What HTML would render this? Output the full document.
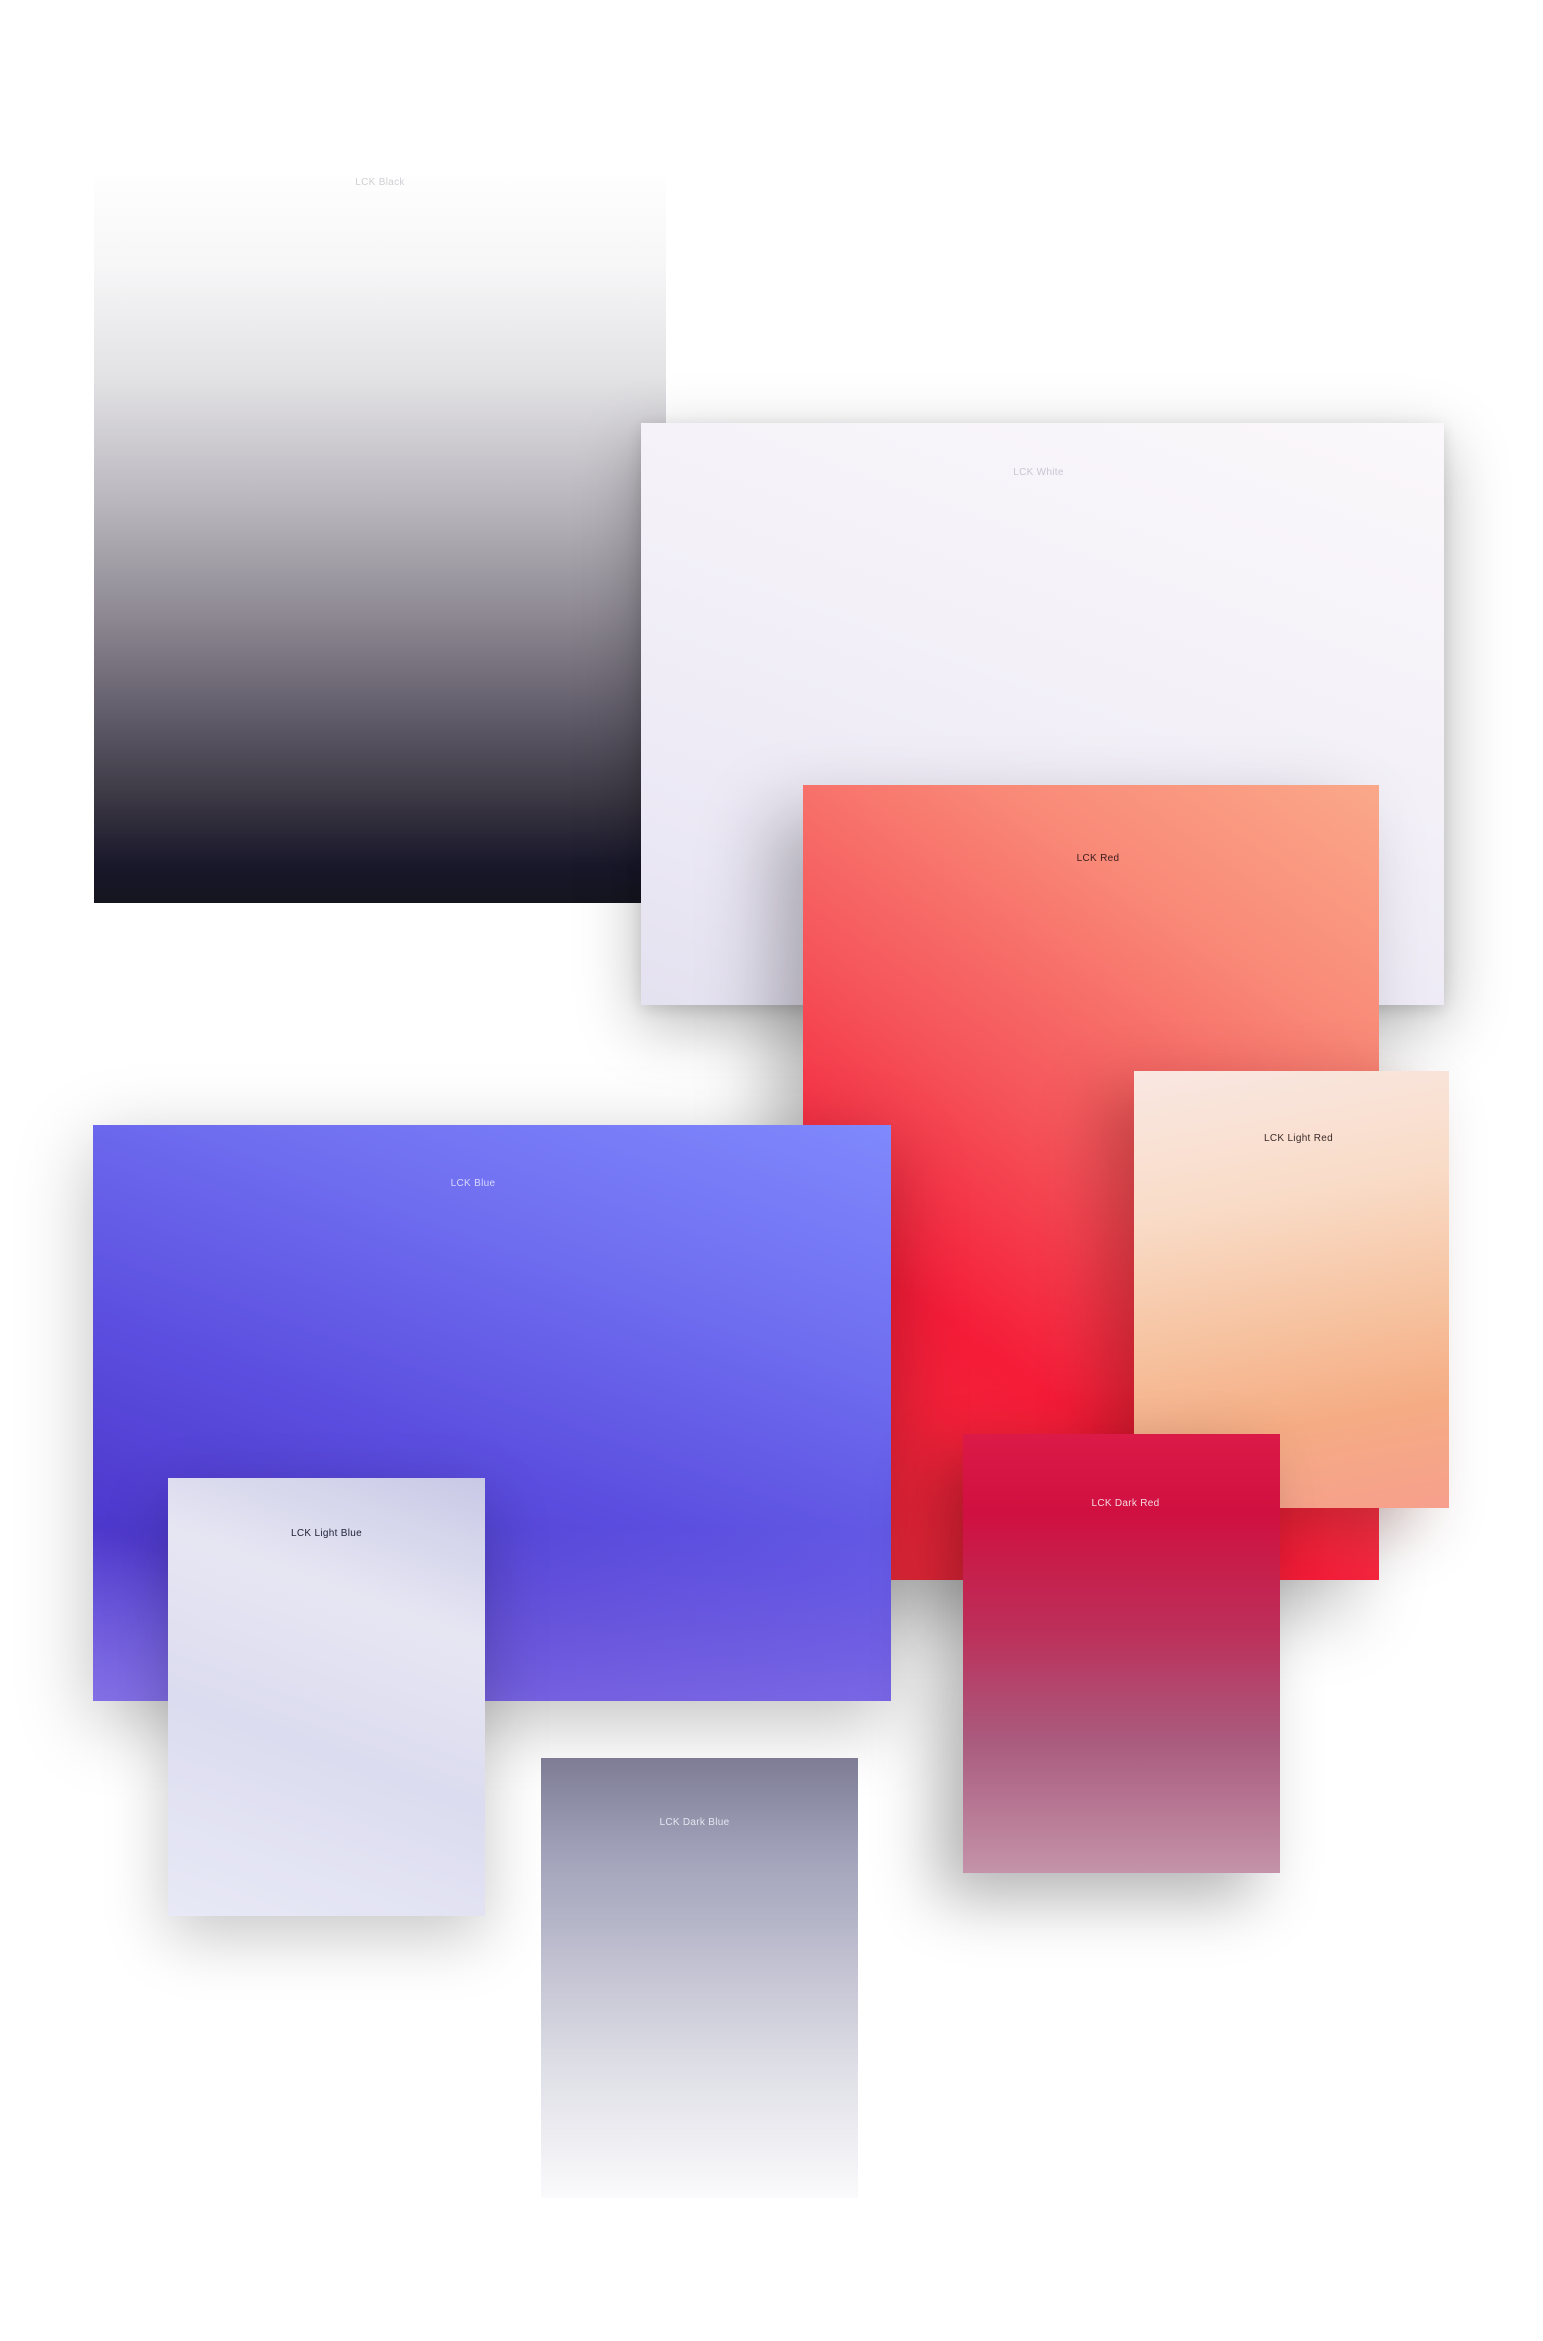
<!DOCTYPE html>
<html><head><meta charset="utf-8">
<style>
html,body{margin:0;padding:0;background:#fff;}
body{width:1543px;height:2341px;position:relative;overflow:hidden;font-family:"Liberation Sans",sans-serif;}
.c{position:absolute;}
.l{position:absolute;left:0;right:0;text-align:center;font-size:10px;letter-spacing:0.3px;}
</style></head><body>

<div class="c" style="left:94px;top:175px;width:572px;height:728px;background:linear-gradient(180deg,#fefefe 0%,#f7f7f8 12%,#e2e1e4 28%,#b9b7bd 45%,#8f8a94 60%,#625d6a 74%,#3a3642 86%,#18172a 95%,#15151f 100%);">
  <div class="l" style="top:2px;color:#d0d0d4;">LCK Black</div>
</div>

<div class="c" style="left:641px;top:423px;width:803px;height:582px;background:linear-gradient(200deg,#fbf8fb 0%,#f3f0f8 45%,#ebe8f5 80%,#e4e1f0 100%);box-shadow:0 20px 60px rgba(0,0,0,0.28),0 4px 14px rgba(0,0,0,0.12);">
  <div class="l" style="top:44px;left:-8px;color:#c8c6d2;">LCK White</div>
</div>

<div class="c" style="left:803px;top:785px;width:576px;height:795px;background:linear-gradient(215deg,#faa88a 0%,#f98a78 22%,#f5535a 48%,#f51c38 70%,#ee2c3c 100%);box-shadow:-30px 30px 70px rgba(0,0,0,0.28);">
  <div class="l" style="top:68px;left:14px;color:#3a1a1e;">LCK Red</div>
</div>

<div class="c" style="left:1134px;top:1071px;width:315px;height:437px;background:linear-gradient(170deg,#f9e7e2 0%,#f9dcc8 30%,#f6c09c 60%,#f5ac84 78%,#f79f8c 100%);box-shadow:-30px 20px 60px rgba(80,0,0,0.3);">
  <div class="l" style="top:62px;left:14px;color:#3a2a2a;">LCK Light Red</div>
</div>

<div class="c" style="left:93px;top:1125px;width:798px;height:576px;background:linear-gradient(200deg,#8089fd 0%,#6f6ef0 28%,#5c4fe0 55%,#4d38cc 80%,#6b58d8 100%);box-shadow:0 20px 70px rgba(0,0,0,0.25);">
  <div style="position:absolute;inset:0;background:linear-gradient(180deg,rgba(0,0,0,0) 70%,rgba(150,130,240,0.55) 100%);"></div>
  <div class="l" style="top:53px;left:-38px;color:#d8d8ff;">LCK Blue</div>
</div>

<div class="c" style="left:963px;top:1434px;width:317px;height:439px;background:linear-gradient(180deg,#dc1a48 0%,#d01040 18%,#bc2f5a 45%,#aa5b7e 70%,#c493a9 100%);box-shadow:-25px 25px 60px rgba(0,0,0,0.3);">
  <div class="l" style="top:64px;left:8px;color:#f5d8de;">LCK Dark Red</div>
</div>

<div class="c" style="left:168px;top:1478px;width:317px;height:438px;background:linear-gradient(200deg,#c8c8e6 0%,#e6e6f3 30%,#dcdcf0 60%,#e8e9f6 100%);box-shadow:0 20px 60px rgba(0,0,0,0.22);">
  <div class="l" style="top:50px;color:#22223a;">LCK Light Blue</div>
</div>

<div class="c" style="left:541px;top:1758px;width:317px;height:440px;background:linear-gradient(180deg,#7d7c94 0%,#9f9fb8 20%,#bfbfd0 45%,#dedee6 70%,#fafafc 100%);">
  <div class="l" style="top:59px;left:-10px;color:#e6e6f0;">LCK Dark Blue</div>
</div>

</body></html>
